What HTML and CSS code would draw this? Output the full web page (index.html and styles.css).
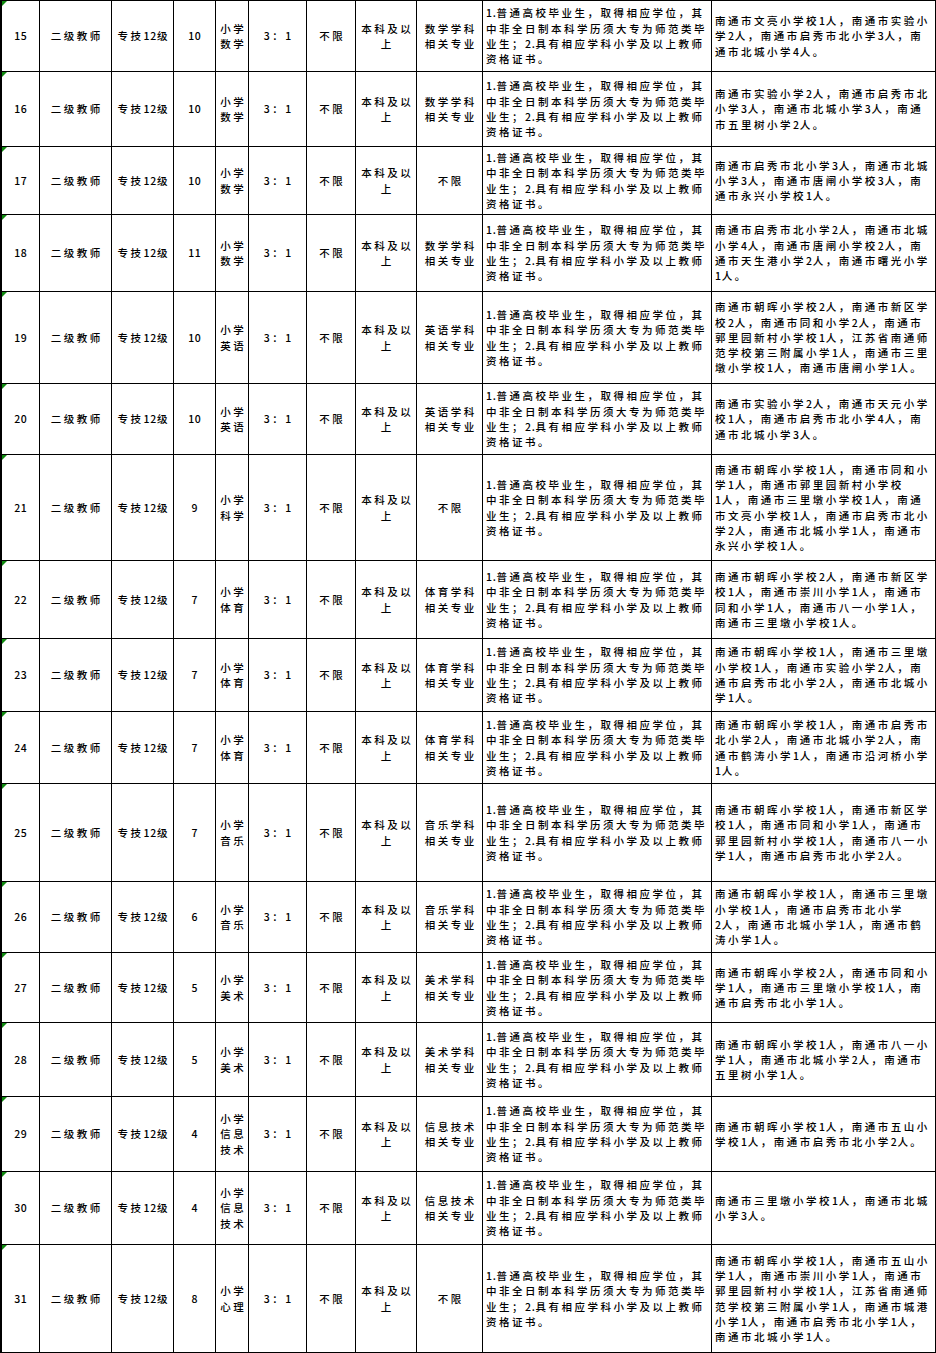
FILE: index.html
```html
<!DOCTYPE html>
<html lang="zh-CN">
<head>
<meta charset="utf-8">
<title>招聘岗位表</title>
<link rel="stylesheet" href="styles.css">
</head>
<body>
<table class="grid">
<colgroup>
<col class="c-no"><col class="c-title"><col class="c-level"><col class="c-count"><col class="c-subj"><col class="c-ratio"><col class="c-age"><col class="c-edu"><col class="c-major"><col class="c-req"><col class="c-school">
</colgroup>
<tbody>
<tr class="r15"><td class="no">15</td><td>二级教师</td><td>专技<span class="n">12</span>级</td><td class="num">10</td><td>小学<br>数学</td><td>3：1</td><td>不限</td><td>本科及以<br>上</td><td>数学学科<br>相关专业</td><td class="txt"><span class="n">1.</span>普通高校毕业生，取得相应学位，其<br>中非全日制本科学历须大专为师范类毕<br>业生；<span class="n">2.</span>具有相应学科小学及以上教师<br>资格证书。</td><td class="txt">南通市文亮小学校<span class="n">1</span>人，南通市实验小<br>学<span class="n">2</span>人，南通市启秀市北小学<span class="n">3</span>人，南<br>通市北城小学<span class="n">4</span>人。</td></tr>
<tr class="r16"><td class="no">16</td><td>二级教师</td><td>专技<span class="n">12</span>级</td><td class="num">10</td><td>小学<br>数学</td><td>3：1</td><td>不限</td><td>本科及以<br>上</td><td>数学学科<br>相关专业</td><td class="txt"><span class="n">1.</span>普通高校毕业生，取得相应学位，其<br>中非全日制本科学历须大专为师范类毕<br>业生；<span class="n">2.</span>具有相应学科小学及以上教师<br>资格证书。</td><td class="txt">南通市实验小学<span class="n">2</span>人，南通市启秀市北<br>小学<span class="n">3</span>人，南通市北城小学<span class="n">3</span>人，南通<br>市五里树小学<span class="n">2</span>人。</td></tr>
<tr class="r17"><td class="no">17</td><td>二级教师</td><td>专技<span class="n">12</span>级</td><td class="num">10</td><td>小学<br>数学</td><td>3：1</td><td>不限</td><td>本科及以<br>上</td><td>不限</td><td class="txt"><span class="n">1.</span>普通高校毕业生，取得相应学位，其<br>中非全日制本科学历须大专为师范类毕<br>业生；<span class="n">2.</span>具有相应学科小学及以上教师<br>资格证书。</td><td class="txt">南通市启秀市北小学<span class="n">3</span>人，南通市北城<br>小学<span class="n">3</span>人，南通市唐闸小学校<span class="n">3</span>人，南<br>通市永兴小学校<span class="n">1</span>人。</td></tr>
<tr class="r18"><td class="no">18</td><td>二级教师</td><td>专技<span class="n">12</span>级</td><td class="num">11</td><td>小学<br>数学</td><td>3：1</td><td>不限</td><td>本科及以<br>上</td><td>数学学科<br>相关专业</td><td class="txt"><span class="n">1.</span>普通高校毕业生，取得相应学位，其<br>中非全日制本科学历须大专为师范类毕<br>业生；<span class="n">2.</span>具有相应学科小学及以上教师<br>资格证书。</td><td class="txt">南通市启秀市北小学<span class="n">2</span>人，南通市北城<br>小学<span class="n">4</span>人，南通市唐闸小学校<span class="n">2</span>人，南<br>通市天生港小学<span class="n">2</span>人，南通市曙光小学<br><span class="n">1</span>人。</td></tr>
<tr class="r19"><td class="no">19</td><td>二级教师</td><td>专技<span class="n">12</span>级</td><td class="num">10</td><td>小学<br>英语</td><td>3：1</td><td>不限</td><td>本科及以<br>上</td><td>英语学科<br>相关专业</td><td class="txt"><span class="n">1.</span>普通高校毕业生，取得相应学位，其<br>中非全日制本科学历须大专为师范类毕<br>业生；<span class="n">2.</span>具有相应学科小学及以上教师<br>资格证书。</td><td class="txt">南通市朝晖小学校<span class="n">2</span>人，南通市新区学<br>校<span class="n">2</span>人，南通市同和小学<span class="n">2</span>人，南通市<br>郭里园新村小学校<span class="n">1</span>人，江苏省南通师<br>范学校第三附属小学<span class="n">1</span>人，南通市三里<br>墩小学校<span class="n">1</span>人，南通市唐闸小学<span class="n">1</span>人。</td></tr>
<tr class="r20"><td class="no">20</td><td>二级教师</td><td>专技<span class="n">12</span>级</td><td class="num">10</td><td>小学<br>英语</td><td>3：1</td><td>不限</td><td>本科及以<br>上</td><td>英语学科<br>相关专业</td><td class="txt"><span class="n">1.</span>普通高校毕业生，取得相应学位，其<br>中非全日制本科学历须大专为师范类毕<br>业生；<span class="n">2.</span>具有相应学科小学及以上教师<br>资格证书。</td><td class="txt">南通市实验小学<span class="n">2</span>人，南通市天元小学<br>校<span class="n">1</span>人，南通市启秀市北小学<span class="n">4</span>人，南<br>通市北城小学<span class="n">3</span>人。</td></tr>
<tr class="r21"><td class="no">21</td><td>二级教师</td><td>专技<span class="n">12</span>级</td><td class="num">9</td><td>小学<br>科学</td><td>3：1</td><td>不限</td><td>本科及以<br>上</td><td>不限</td><td class="txt"><span class="n">1.</span>普通高校毕业生，取得相应学位，其<br>中非全日制本科学历须大专为师范类毕<br>业生；<span class="n">2.</span>具有相应学科小学及以上教师<br>资格证书。</td><td class="txt">南通市朝晖小学校<span class="n">1</span>人，南通市同和小<br>学<span class="n">1</span>人，南通市郭里园新村小学校<br><span class="n">1</span>人，南通市三里墩小学校<span class="n">1</span>人，南通<br>市文亮小学校<span class="n">1</span>人，南通市启秀市北小<br>学<span class="n">2</span>人，南通市北城小学<span class="n">1</span>人，南通市<br>永兴小学校<span class="n">1</span>人。</td></tr>
<tr class="r22"><td class="no">22</td><td>二级教师</td><td>专技<span class="n">12</span>级</td><td class="num">7</td><td>小学<br>体育</td><td>3：1</td><td>不限</td><td>本科及以<br>上</td><td>体育学科<br>相关专业</td><td class="txt"><span class="n">1.</span>普通高校毕业生，取得相应学位，其<br>中非全日制本科学历须大专为师范类毕<br>业生；<span class="n">2.</span>具有相应学科小学及以上教师<br>资格证书。</td><td class="txt">南通市朝晖小学校<span class="n">2</span>人，南通市新区学<br>校<span class="n">1</span>人，南通市崇川小学<span class="n">1</span>人，南通市<br>同和小学<span class="n">1</span>人，南通市八一小学<span class="n">1</span>人，<br>南通市三里墩小学校<span class="n">1</span>人。</td></tr>
<tr class="r23"><td class="no">23</td><td>二级教师</td><td>专技<span class="n">12</span>级</td><td class="num">7</td><td>小学<br>体育</td><td>3：1</td><td>不限</td><td>本科及以<br>上</td><td>体育学科<br>相关专业</td><td class="txt"><span class="n">1.</span>普通高校毕业生，取得相应学位，其<br>中非全日制本科学历须大专为师范类毕<br>业生；<span class="n">2.</span>具有相应学科小学及以上教师<br>资格证书。</td><td class="txt">南通市朝晖小学校<span class="n">1</span>人，南通市三里墩<br>小学校<span class="n">1</span>人，南通市实验小学<span class="n">2</span>人，南<br>通市启秀市北小学<span class="n">2</span>人，南通市北城小<br>学<span class="n">1</span>人。</td></tr>
<tr class="r24"><td class="no">24</td><td>二级教师</td><td>专技<span class="n">12</span>级</td><td class="num">7</td><td>小学<br>体育</td><td>3：1</td><td>不限</td><td>本科及以<br>上</td><td>体育学科<br>相关专业</td><td class="txt"><span class="n">1.</span>普通高校毕业生，取得相应学位，其<br>中非全日制本科学历须大专为师范类毕<br>业生；<span class="n">2.</span>具有相应学科小学及以上教师<br>资格证书。</td><td class="txt">南通市朝晖小学校<span class="n">1</span>人，南通市启秀市<br>北小学<span class="n">2</span>人，南通市北城小学<span class="n">2</span>人，南<br>通市鹤涛小学<span class="n">1</span>人，南通市沿河桥小学<br><span class="n">1</span>人。</td></tr>
<tr class="r25"><td class="no">25</td><td>二级教师</td><td>专技<span class="n">12</span>级</td><td class="num">7</td><td>小学<br>音乐</td><td>3：1</td><td>不限</td><td>本科及以<br>上</td><td>音乐学科<br>相关专业</td><td class="txt"><span class="n">1.</span>普通高校毕业生，取得相应学位，其<br>中非全日制本科学历须大专为师范类毕<br>业生；<span class="n">2.</span>具有相应学科小学及以上教师<br>资格证书。</td><td class="txt">南通市朝晖小学校<span class="n">1</span>人，南通市新区学<br>校<span class="n">1</span>人，南通市同和小学<span class="n">1</span>人，南通市<br>郭里园新村小学校<span class="n">1</span>人，南通市八一小<br>学<span class="n">1</span>人，南通市启秀市北小学<span class="n">2</span>人。</td></tr>
<tr class="r26"><td class="no">26</td><td>二级教师</td><td>专技<span class="n">12</span>级</td><td class="num">6</td><td>小学<br>音乐</td><td>3：1</td><td>不限</td><td>本科及以<br>上</td><td>音乐学科<br>相关专业</td><td class="txt"><span class="n">1.</span>普通高校毕业生，取得相应学位，其<br>中非全日制本科学历须大专为师范类毕<br>业生；<span class="n">2.</span>具有相应学科小学及以上教师<br>资格证书。</td><td class="txt">南通市朝晖小学校<span class="n">1</span>人，南通市三里墩<br>小学校<span class="n">1</span>人，南通市启秀市北小学<br><span class="n">2</span>人，南通市北城小学<span class="n">1</span>人，南通市鹤<br>涛小学<span class="n">1</span>人。</td></tr>
<tr class="r27"><td class="no">27</td><td>二级教师</td><td>专技<span class="n">12</span>级</td><td class="num">5</td><td>小学<br>美术</td><td>3：1</td><td>不限</td><td>本科及以<br>上</td><td>美术学科<br>相关专业</td><td class="txt"><span class="n">1.</span>普通高校毕业生，取得相应学位，其<br>中非全日制本科学历须大专为师范类毕<br>业生；<span class="n">2.</span>具有相应学科小学及以上教师<br>资格证书。</td><td class="txt">南通市朝晖小学校<span class="n">2</span>人，南通市同和小<br>学<span class="n">1</span>人，南通市三里墩小学校<span class="n">1</span>人，南<br>通市启秀市北小学<span class="n">1</span>人。</td></tr>
<tr class="r28"><td class="no">28</td><td>二级教师</td><td>专技<span class="n">12</span>级</td><td class="num">5</td><td>小学<br>美术</td><td>3：1</td><td>不限</td><td>本科及以<br>上</td><td>美术学科<br>相关专业</td><td class="txt"><span class="n">1.</span>普通高校毕业生，取得相应学位，其<br>中非全日制本科学历须大专为师范类毕<br>业生；<span class="n">2.</span>具有相应学科小学及以上教师<br>资格证书。</td><td class="txt">南通市朝晖小学校<span class="n">1</span>人，南通市八一小<br>学<span class="n">1</span>人，南通市北城小学<span class="n">2</span>人，南通市<br>五里树小学<span class="n">1</span>人。</td></tr>
<tr class="r29"><td class="no">29</td><td>二级教师</td><td>专技<span class="n">12</span>级</td><td class="num">4</td><td>小学<br>信息<br>技术</td><td>3：1</td><td>不限</td><td>本科及以<br>上</td><td>信息技术<br>相关专业</td><td class="txt"><span class="n">1.</span>普通高校毕业生，取得相应学位，其<br>中非全日制本科学历须大专为师范类毕<br>业生；<span class="n">2.</span>具有相应学科小学及以上教师<br>资格证书。</td><td class="txt">南通市朝晖小学校<span class="n">1</span>人，南通市五山小<br>学校<span class="n">1</span>人，南通市启秀市北小学<span class="n">2</span>人。</td></tr>
<tr class="r30"><td class="no">30</td><td>二级教师</td><td>专技<span class="n">12</span>级</td><td class="num">4</td><td>小学<br>信息<br>技术</td><td>3：1</td><td>不限</td><td>本科及以<br>上</td><td>信息技术<br>相关专业</td><td class="txt"><span class="n">1.</span>普通高校毕业生，取得相应学位，其<br>中非全日制本科学历须大专为师范类毕<br>业生；<span class="n">2.</span>具有相应学科小学及以上教师<br>资格证书。</td><td class="txt">南通市三里墩小学校<span class="n">1</span>人，南通市北城<br>小学<span class="n">3</span>人。</td></tr>
<tr class="r31"><td class="no">31</td><td>二级教师</td><td>专技<span class="n">12</span>级</td><td class="num">8</td><td>小学<br>心理</td><td>3：1</td><td>不限</td><td>本科及以<br>上</td><td>不限</td><td class="txt"><span class="n">1.</span>普通高校毕业生，取得相应学位，其<br>中非全日制本科学历须大专为师范类毕<br>业生；<span class="n">2.</span>具有相应学科小学及以上教师<br>资格证书。</td><td class="txt">南通市朝晖小学校<span class="n">1</span>人，南通市五山小<br>学<span class="n">1</span>人，南通市崇川小学<span class="n">1</span>人，南通市<br>郭里园新村小学校<span class="n">1</span>人，江苏省南通师<br>范学校第三附属小学<span class="n">1</span>人，南通市城港<br>小学<span class="n">1</span>人，南通市启秀市北小学<span class="n">1</span>人，<br>南通市北城小学<span class="n">1</span>人。</td></tr>
</tbody>
</table>
</body>
</html>
```

FILE: styles.css
```css
html, body {
  margin: 0;
  padding: 0;
  background: #ffffff;
}

.grid {
  table-layout: fixed;
  width: 936px;
  border-collapse: separate;
  border-spacing: 0;
  border-left: 2px solid #000;
  border-top: 1px solid #000;
  font-family: "Noto Sans CJK SC", "Noto Sans", sans-serif;
  font-size: 10.5px;
  font-weight: 500;
  letter-spacing: 2.5px;
  line-height: 15.3px;
  color: #000;
}

.c-no { width: 38px; }
.c-title { width: 72px; }
.c-level { width: 62px; }
.c-count { width: 42px; }
.c-subj { width: 33px; }
.c-ratio { width: 58px; }
.c-age { width: 49px; }
.c-edu { width: 61px; }
.c-major { width: 66px; }
.c-req { width: 229px; }
.c-school { width: 224px; }

.grid td {
  border-right: 1px solid #000;
  border-bottom: 1px solid #000;
  padding: 0 0 0 2.5px;
  text-align: center;
  vertical-align: middle;
  white-space: nowrap;
  overflow: hidden;
}

.grid td.txt {
  text-align: left;
  padding: 0 0 0 3px;
}

.n {
  letter-spacing: 0.7px;
}

.grid td.num {
  letter-spacing: 0.7px;
  padding-left: 0.7px;
}

.grid td.no {
  position: relative;
  letter-spacing: 0.7px;
  padding-left: 0.7px;
}

.grid td.no::before {
  content: "";
  position: absolute;
  left: 0;
  top: 0;
  width: 0;
  height: 0;
  border-top: 5px solid #0f8a0f;
  border-right: 5px solid transparent;
}

.r15 { height: 71px; }
.r16 { height: 75px; }
.r17 { height: 68px; }
.r18 { height: 77px; }
.r19 { height: 92px; }
.r20 { height: 71px; }
.r21 { height: 106px; }
.r22 { height: 78px; }
.r23 { height: 73px; }
.r24 { height: 72px; }
.r25 { height: 98px; }
.r26 { height: 71px; }
.r27 { height: 70px; }
.r28 { height: 74px; }
.r29 { height: 75px; }
.r30 { height: 73px; }
.r31 { height: 108px; }
```
